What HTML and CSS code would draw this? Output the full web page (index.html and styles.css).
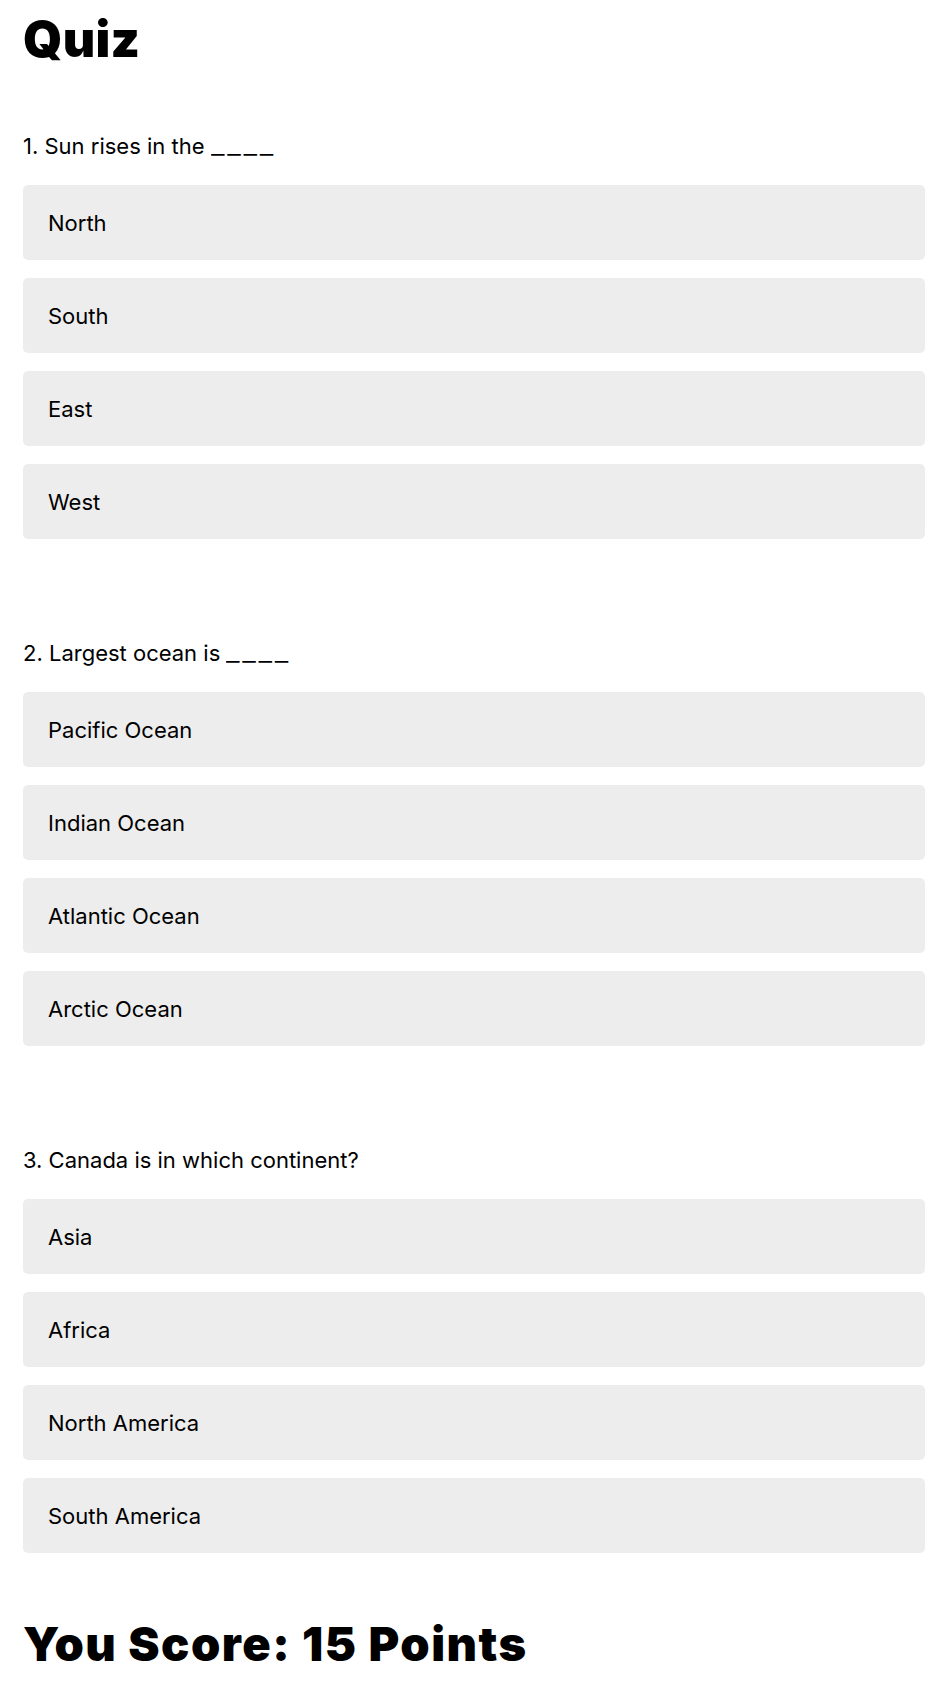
FILE: index.html
```html
<!DOCTYPE html>
<html lang="en">
<head>
<meta charset="utf-8">
<title>Quiz</title>
<link rel="stylesheet" href="styles.css">
</head>
<body>
<main class="quiz">
  <h1 class="title">Quiz</h1>

  <section class="question">
    <p class="question-text">1. Sun rises in the <span class="blank">____</span></p>
    <div class="options">
      <div class="option">North</div>
      <div class="option">South</div>
      <div class="option">East</div>
      <div class="option">West</div>
    </div>
  </section>

  <section class="question">
    <p class="question-text">2. Largest ocean is <span class="blank">____</span></p>
    <div class="options">
      <div class="option">Pacific Ocean</div>
      <div class="option">Indian Ocean</div>
      <div class="option">Atlantic Ocean</div>
      <div class="option">Arctic Ocean</div>
    </div>
  </section>

  <section class="question">
    <p class="question-text">3. Canada is in which continent?</p>
    <div class="options">
      <div class="option">Asia</div>
      <div class="option">Africa</div>
      <div class="option">North America</div>
      <div class="option">South America</div>
    </div>
  </section>

  <h1 class="score">You Score: 15 Points</h1>
</main>
</body>
</html>
```

FILE: styles.css
```css
html, body {
  margin: 0;
  padding: 0;
  background: #ffffff;
}

body {
  font-family: Inter, "Noto Sans", "DejaVu Sans", sans-serif;
  color: #000000;
}

.quiz {
  padding: 9px 23px 0 23px;
  display: flex;
  flex-direction: column;
}

.title {
  margin: 0;
  font-size: 50px;
  line-height: 60px;
  font-weight: 900;
  letter-spacing: 0.3px;
}

.question {
  margin-top: 62px;
}

.question + .question {
  margin-top: 99px;
}

.question-text {
  margin: 0;
  font-size: 22px;
  line-height: 30px;
  font-weight: 400;
}

.blank {
  display: inline-block;
  letter-spacing: 2px;
  transform: scaleX(1.35);
  transform-origin: left center;
}

.options {
  margin-top: 24px;
  display: flex;
  flex-direction: column;
  gap: 18px;
}

.option {
  height: 75px;
  box-sizing: border-box;
  display: flex;
  align-items: center;
  padding: 0 25px;
  background: #ededed;
  border-radius: 5px;
  font-size: 22px;
  line-height: 30px;
}

.score {
  margin: 63px 0 0 0;
  font-size: 47px;
  line-height: 56px;
  font-weight: 900;
  letter-spacing: 1.5px;
}
```
